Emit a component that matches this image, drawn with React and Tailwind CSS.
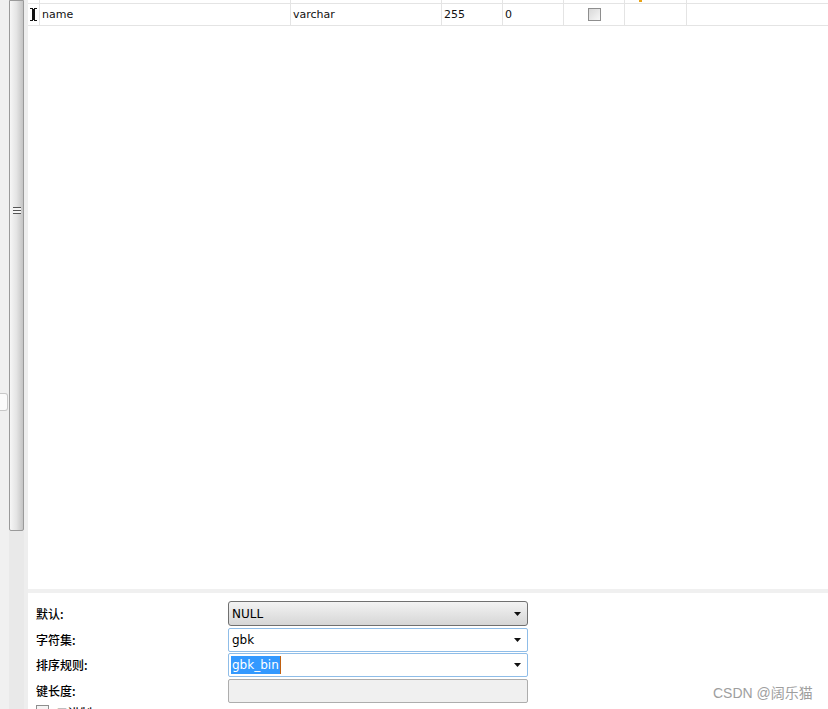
import React from "react";

const cjk = { fontFamily: '"Noto Sans CJK SC", "Noto Sans", sans-serif' };
const tbl = { fontFamily: '"DejaVu Sans", Verdana, sans-serif' };

const Arrow = () => (
  <svg width="7" height="4" viewBox="0 0 7 4" className="shrink-0">
    <path d="M0 0H7L3.5 4Z" fill="#111" />
  </svg>
);

const Cell = ({ w, children, className = "" }) => (
  <div className={`h-full shrink-0 border-r border-[#e4e4e4] flex items-center ${w} ${className}`}>
    {children}
  </div>
);

const App = () => {
  return (
    <div className="relative w-[828px] h-[709px] overflow-hidden bg-white flex" style={tbl}>
      {/* left edge strip with tab */}
      <div className="w-[9px] shrink-0 bg-[#f0f0f0] flex flex-col">
        <div className="h-[393px]" />
        <div className="h-[18px] w-[8px] bg-[#fbfbfb] border border-l-0 border-[#c8c8c8] rounded-r-[3px]" />
      </div>

      {/* vertical scrollbar */}
      <div className="w-[15px] shrink-0 flex flex-col bg-[#e9e9e9]">
        <div className="h-[531px] border border-[#9a9a9a] rounded-b-[2px] bg-gradient-to-r from-[#f6f6f6] via-[#e4e4e4] to-[#c4c4c4] flex flex-col items-center">
          <div className="h-[206px]" />
          <div className="w-[8px] h-px bg-[#555]" />
          <div className="w-[8px] h-[2px] bg-[#f5f5f5]" />
          <div className="w-[8px] h-px bg-[#555]" />
          <div className="w-[8px] h-[2px] bg-[#f5f5f5]" />
          <div className="w-[8px] h-px bg-[#555]" />
        </div>
      </div>
      <div className="w-[4px] shrink-0 bg-[#eeeeee]" />

      {/* main */}
      <div className="flex-1 flex flex-col">
        {/* table */}
        <div className="h-[589px] shrink-0 flex flex-col">
          <div className="h-[3px] flex">
            <Cell w="w-[12px]" />
            <Cell w="w-[251px]" />
            <Cell w="w-[151px]" />
            <Cell w="w-[61px]" />
            <Cell w="w-[61px]" />
            <Cell w="w-[61px]" />
            <Cell w="w-[62px]" className="items-start">
              <div className="ml-[14px] w-[3px] h-[2px] bg-[#e8a317]" />
            </Cell>
          </div>
          <div className="h-[23px] flex border-y border-[#e4e4e4] text-[11px] text-[#111]">
            <Cell w="w-[12px]" className="justify-center">
              <svg width="7" height="13" viewBox="0 0 7 13">
                <path d="M0 0H3V1H4V0H7V1H5V12H7V13H4V12H3V13H0V12H2V1H0Z" fill="#111" />
              </svg>
            </Cell>
            <Cell w="w-[251px]" className="pl-[2px] pt-[2px]">name</Cell>
            <Cell w="w-[151px]" className="pl-[2px] pt-[2px]">varchar</Cell>
            <Cell w="w-[61px]" className="pl-[2px] pt-[2px]">255</Cell>
            <Cell w="w-[61px]" className="pl-[2px] pt-[2px]">0</Cell>
            <Cell w="w-[61px]" className="justify-center">
              <div className="w-[13px] h-[13px] border border-[#8e8e8e] bg-gradient-to-br from-[#d8d8d8] to-[#f7f7f7] ml-[1px]" />
            </Cell>
            <Cell w="w-[62px]" />
          </div>
        </div>

        <div className="h-[4px] shrink-0 bg-[#f0f0f0]" />

        {/* field properties panel */}
        <div className="flex flex-col gap-[2px] pt-[8px] pl-[8px] text-[12px] text-black">
          <div className="flex items-center h-[25px]">
            <div className="w-[192px] font-medium" style={cjk}>默认:</div>
            <div className="w-[300px] h-[25px] rounded-[3px] border border-[#707070] bg-gradient-to-b from-[#f3f3f3] to-[#d6d6d6] flex items-center pl-[3px] pr-[6px] justify-between">
              <span>NULL</span>
              <Arrow />
            </div>
          </div>
          <div className="flex items-center h-[23px]">
            <div className="w-[192px] font-medium" style={cjk}>字符集:</div>
            <div className="w-[300px] h-[24px] rounded-[2px] border border-[#8fbde8] bg-white flex items-center pl-[3px] pr-[6px] justify-between">
              <span>gbk</span>
              <Arrow />
            </div>
          </div>
          <div className="flex items-center h-[24px]">
            <div className="w-[192px] font-medium" style={cjk}>排序规则:</div>
            <div className="w-[300px] h-[24px] rounded-[2px] border border-[#8fbde8] bg-white flex items-center pl-[2px] pr-[6px] justify-between">
              <span className="flex items-center">
                <span className="bg-[#3399ff] text-white px-px leading-[18px]">gbk_bin</span>
                <span className="w-px h-[18px] bg-[#c06010]" />
              </span>
              <Arrow />
            </div>
          </div>
          <div className="flex items-center h-[24px]">
            <div className="w-[192px] font-medium" style={cjk}>键长度:</div>
            <div className="w-[300px] h-[24px] rounded-[2px] border border-[#adadad] bg-[#f0f0f0]" />
          </div>
          <div className="flex items-start h-[16px]">
            <div className="w-[13px] h-[13px] border border-[#8e8e8e] bg-[#f4f4f4]" />
            <span className="ml-[7px] font-medium leading-[16px]" style={cjk}>二进制</span>
          </div>
        </div>
      </div>

      <div
        className="absolute left-[713px] top-[683px] text-[14px] text-[#9e9e9e]"
        style={{ fontFamily: '"Liberation Sans", "Noto Sans CJK SC", sans-serif' }}
      >
        CSDN @阔乐猫
      </div>
    </div>
  );
};

export default App;
